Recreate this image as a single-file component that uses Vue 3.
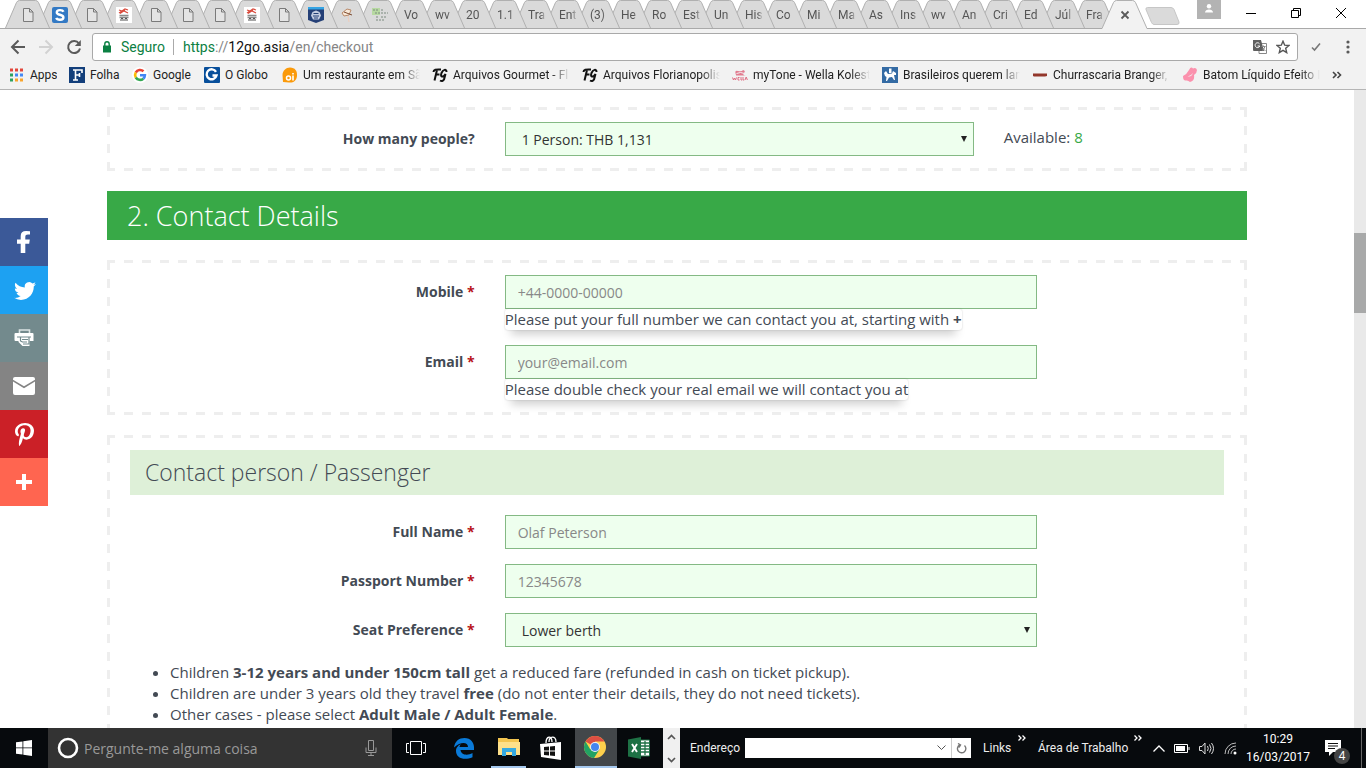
<script setup>
import { ref } from 'vue'

const iconTabs = ['doc', 'skype', 'doc', 'red', 'doc', 'doc', 'doc', 'red', 'doc', 'shield', 'hand', 'green']
const textTabs = [
  'Vo', 'wv', '20', '1.1', 'Tra', 'Ent', '(3)', 'He', 'Ro', 'Est', 'Un', 'His',
  'Co', 'Mi', 'Ma', 'As', 'Ins', 'wv', 'An', 'Cri', 'Ed', 'Júl', 'Fra'
]
const tabs = [
  ...iconTabs.map((icon) => ({ icon })),
  ...textTabs.map((label) => ({ label }))
]

const bookmarks = [
  { icon: 'apps', label: 'Apps', width: 27 },
  { icon: 'folha', label: 'Folha', width: 30 },
  { icon: 'google', label: 'Google', width: 39 },
  { icon: 'globo', label: 'O Globo', width: 45 },
  { icon: 'oi', label: 'Um restaurante em Sã', width: 117, fade: true },
  { icon: 'fg', label: 'Arquivos Gourmet - Fl', width: 117, fade: true },
  { icon: 'fg', label: 'Arquivos Florianopolis', width: 117, fade: true },
  { icon: 'wella', label: 'myTone - Wella Kolest', width: 117, fade: true },
  { icon: 'horse', label: 'Brasileiros querem lan', width: 117, fade: true },
  { icon: 'bar', label: 'Churrascaria Branger,', width: 117, fade: true },
  { icon: 'lips', label: 'Batom Líquido Efeito I', width: 117, fade: true }
]

const people = ref('1')
const seat = ref('lower')
const mobile = ref('')
const email = ref('')
const fullName = ref('')
const passport = ref('')
const address = ref('')
const question = ref('')
</script>

<template>
  <div class="screen">
    <header class="browser">
      <div class="tab-strip">
        <div
          v-for="(tab, i) in tabs"
          :key="i"
          class="tab"
          :class="{ 'tab-text': tab.label }"
          :style="{ zIndex: tabs.length - i }"
        >
          <svg class="tab-shape" width="45" height="28" viewBox="0 0 45 28">
            <path d="M0.5 28L11.5 2.5Q12.500 .5 14.500 .5H30.500Q32.500 .5 33.500 2.500L44.500 28" fill="#dadada" stroke="#b0b0b0" />
          </svg>
          <span v-if="tab.label" class="tab-label">{{ tab.label }}</span>
          <svg v-else class="tab-icon" width="16" height="16" viewBox="0 0 16 16">
            <path v-if="tab.icon === 'doc'" d="M3.500 1.500h6l3.500 3.500v9.500h-9.500zM9.500 1.500v3.500h3.500" fill="#e4e4e4" stroke="#7a7a7a" />
            <g v-else-if="tab.icon === 'skype'">
              <rect width="16" height="16" rx="2" fill="#3279c4" />
              <path d="M11.500 4.800C10.500 2.500 4.800 2.500 4.800 5.400C4.800 8.500 11.400 7 11.400 10.400C11.400 13.400 5.200 13.400 4.300 10.800" fill="none" stroke="#fff" stroke-width="2.400" />
            </g>
            <g v-else-if="tab.icon === 'red'">
              <rect width="16" height="16" fill="#fff" />
              <path d="M3 3l3 1 3-2 3 1M3 6l4-2.500 5 2.500M9 3L4 6.500" stroke="#d94b3d" stroke-width="1.300" fill="none" />
              <path d="M3.500 8.500h9M3.500 10.500h9M4 13h8" stroke="#8b8b8b" stroke-width="1.600" />
              <path d="M5 11.500h2M9 11.500h2" stroke="#555" />
            </g>
            <g v-else-if="tab.icon === 'shield'">
              <path d="M0 0h16v13l-8 3-8-3z" fill="#243f76" />
              <path d="M0 0h16v2.500H0z" fill="#35a4e4" />
              <path d="M4.500 5L8 3.500 11.500 5 13 8.500 11 12.500H5L3 8.500z" fill="#c3cbe0" />
              <path d="M5.500 6.500h5M5 9h6M6 11h4" stroke="#243f76" />
            </g>
            <g v-else-if="tab.icon === 'hand'">
              <path d="M2 6l5-4 4 1-2 5-5 1z" fill="#f9ead9" stroke="#b98a6a" />
              <path d="M4 5l8 3" stroke="#7c4a30" /><path d="M8 9l1 6" stroke="#f0cdbb" />
            </g>
            <g v-else>
              <path d="M0 1h8v7H0z" fill="#b7d9a1" />
              <path d="M1 3h6M3 6h5M9 3h3M9 6h7M4 10h3M9 10h6M4 13h8" stroke="#7b8a7e" stroke-dasharray="2 1" />
            </g>
          </svg>
        </div>
        <div class="tab tab-active">
          <svg class="tab-shape" width="45" height="29" viewBox="0 0 45 29">
            <path d="M0 28.500L11.500 2.500Q12.500 .5 14.500 .5H30.500Q32.500 .5 33.500 2.500L45 28.500V29H0z" fill="#f2f2f2" />
            <path d="M0 28.500L11.500 2.500Q12.500 .5 14.500 .5H30.500Q32.500 .5 33.500 2.500L45 28.500" fill="none" stroke="#b0b0b0" />
          </svg>
          <button class="plain tab-close" aria-label="Close tab">
            <svg width="10" height="10" viewBox="0 0 10 10"><path d="M1.500 1.500l7 7M8.500 1.500l-7 7" stroke="#5a5a5a" stroke-width="1.800" /></svg>
          </button>
        </div>
        <button class="plain new-tab" aria-label="New tab">
          <svg width="35" height="18" viewBox="0 0 35 18"><path d="M2.500 .5H26Q28 .5 29 2.500L34 15Q34.500 17.500 32 17.500H9Q7.500 17.500 6.500 15.500L1 2.500Q.5 .5 2.500 .5z" fill="#dadada" stroke="#c6c6c6" /></svg>
        </button>
        <div class="window-controls">
          <button class="profile" aria-label="Profile">
            <svg width="10" height="9" viewBox="0 0 10 9"><circle cx="5" cy="2.200" r="2.200" fill="#fff" /><path d="M1 8.500C1 4.500 9 4.500 9 8.500z" fill="#fff" /></svg>
          </button>
          <button class="plain" aria-label="Minimize"><svg width="10" height="10" viewBox="0 0 10 10"><path d="M0 5.500h10" stroke="#000" /></svg></button>
          <button class="plain" aria-label="Restore"><svg width="10" height="10" viewBox="0 0 10 10"><path d="M.5 2.500h7v7h-7zM2.500 2.500v-2h7v7h-2" fill="none" stroke="#000" /></svg></button>
          <button class="plain" aria-label="Close"><svg width="10" height="10" viewBox="0 0 10 10"><path d="M0 0l10 10M10 0L0 10" stroke="#000" /></svg></button>
        </div>
      </div>

      <div class="toolbar">
        <button class="plain" aria-label="Back">
          <svg width="16" height="16" viewBox="0 0 16 16"><path d="M15 8H2M8.500 1.500L2 8l6.500 6.500" fill="none" stroke="#5a5a5a" stroke-width="2" /></svg>
        </button>
        <button class="plain" aria-label="Forward">
          <svg width="16" height="16" viewBox="0 0 16 16"><path d="M1 8h13M7.500 1.500L14 8l-6.500 6.500" fill="none" stroke="#d2d2d2" stroke-width="2" /></svg>
        </button>
        <button class="plain" aria-label="Reload">
          <svg width="16" height="16" viewBox="0 0 16 16"><path d="M13 4.500A6 6 0 1 0 14 9.500" fill="none" stroke="#5a5a5a" stroke-width="2" /><path d="M14.800 1v6H8.800z" fill="#5a5a5a" /></svg>
        </button>
        <div class="omnibox">
          <svg width="10" height="12" viewBox="0 0 10 12"><rect x="1" y="4.500" width="8" height="7" fill="#0b8043" /><path d="M2.800 5V3a2.200 2.200 0 0 1 4.400 0v2" fill="none" stroke="#0b8043" stroke-width="1.400" /></svg>
          <span class="secure">Seguro</span>
          <span class="url"><span class="scheme">https</span>://<span class="host">12go.asia</span>/en/checkout</span>
          <svg width="14" height="14" viewBox="0 0 14 14">
            <path d="M6 3.500h7.500v10H6z" fill="#fff" stroke="#888" />
            <path d="M0 0h8l3 11H1q-1 0-1-1z" fill="#5f5f5f" />
            <path d="M6.500 3.800A2.400 2.400 0 1 0 6.800 6H4.600" fill="none" stroke="#fff" />
            <path d="M8.500 6.500h4M10.500 5.500v1M12 6.500q-1 3-3 4M9.500 8l3 3" fill="none" stroke="#888" />
          </svg>
          <svg width="14" height="14" viewBox="0 0 14 14"><path d="M7 1.200l1.700 4 4.300.3-3.300 2.800 1 4.300L7 10.300l-3.700 2.300 1-4.300L1 5.500l4.300-.3z" fill="none" stroke="#555" stroke-width="1.400" /></svg>
        </div>
        <svg width="10" height="10" viewBox="0 0 10 10"><path d="M1 5.500l2.500 2.500L9 1.500" fill="none" stroke="#777" stroke-width="1.600" /></svg>
        <button class="plain menu" aria-label="Menu">
          <svg width="4" height="14" viewBox="0 0 4 14"><g fill="#5a5a5a"><circle cx="2" cy="2" r="1.600" /><circle cx="2" cy="7" r="1.600" /><circle cx="2" cy="12" r="1.600" /></g></svg>
        </button>
      </div>

      <nav class="bookmarks">
        <a v-for="(mark, i) in bookmarks" :key="i" href="#" class="bookmark">
          <svg width="16" height="16" viewBox="0 0 16 16">
            <g v-if="mark.icon === 'apps'">
              <path d="M1 3h14" stroke="#e2463b" stroke-width="3" stroke-dasharray="3 2" />
              <path d="M1 8h3" stroke="#2da160" stroke-width="3" />
              <path d="M6 8h8" stroke="#4587f3" stroke-width="3" stroke-dasharray="3 2" />
              <path d="M1 13h3" stroke="#2da160" stroke-width="3" />
              <path d="M6 13h8" stroke="#f9a52d" stroke-width="3" stroke-dasharray="3 2" />
            </g>
            <g v-else-if="mark.icon === 'folha'">
              <rect width="16" height="16" fill="#133f7b" />
              <path d="M4 3h9v3M6.500 3v10M4 13h5M6.500 8h4.500M10.500 6v4" fill="none" stroke="#fff" stroke-width="1.600" />
            </g>
            <g v-else-if="mark.icon === 'google'" fill="none" stroke-width="2.600">
              <circle cx="8" cy="8" r="8" fill="#fff" />
              <path d="M3.800 5.500A5 5 0 0 1 11.500 4.300" stroke="#ea4335" />
              <path d="M3.800 10.500a5 5 0 0 1 0-5" stroke="#fbbc05" />
              <path d="M3.800 10.500a5 5 0 0 0 7.500 1.200" stroke="#34a853" />
              <path d="M11.300 11.700A5 5 0 0 0 12.900 8.200H8" stroke="#4285f4" />
            </g>
            <g v-else-if="mark.icon === 'globo'">
              <rect width="16" height="16" rx="1" fill="#084f9b" />
              <path d="M12 4.800A5 5 0 1 0 12.500 8.500H8.500" fill="none" stroke="#fff" stroke-width="2.400" />
            </g>
            <g v-else-if="mark.icon === 'oi'">
              <path d="M8 .5C13 .5 15.500 4 15 9s-4 7-8 6.500L1 15 .5 8C.5 4 4 .5 8 .5z" fill="#fb9a0a" />
              <circle cx="6.500" cy="11" r="2" fill="none" stroke="#fff" stroke-width="1.500" />
              <path d="M11 8.500v5M11 6v1.500" stroke="#fff" stroke-width="1.600" />
            </g>
            <g v-else-if="mark.icon === 'fg'" fill="none" stroke="#111" stroke-width="2">
              <path d="M1.500 5C1.500 2 5 2.500 9 2.500M5 3L2.500 13.500M3.500 7.500h4" />
              <path d="M14.500 5C14.500 1.500 11 2.500 9.500 6C8 10 10.500 11 13.500 7L12 12.500Q10.500 15 8 13.500" />
            </g>
            <g v-else-if="mark.icon === 'wella'" fill="none" stroke="#df6c82">
              <path d="M4 8Q2 3 6 4T11 3Q14 4 12 6T14 8.500H4z" fill="#e27c90" stroke="none" />
              <path d="M4.500 6.500q4-2 8 0" stroke="#f2f2f2" />
              <path d="M.5 10.500l1 2.500 1-2 1 2 1-2.500M7.500 10.500h-1.500v2.500h1.500M9 10v3h1.200M11 10v3h1.200M13 13l1.200-3 1.200 3" />
            </g>
            <g v-else-if="mark.icon === 'horse'">
              <rect width="16" height="16" fill="#346ba4" />
              <path d="M2 6l2-2 2 3 4-.5L11 4l3 2v2h-2l1 5h-1l-2-3-3 .5L5 14H4l.5-4L3 9zM7 1.500h2.500V6H7z" fill="#fff" />
            </g>
            <path v-else-if="mark.icon === 'bar'" d="M1 6.500h14v2.500l-2 .5H2L1 9z" fill="#93372b" />
            <path v-else d="M1 9Q5 7 7 3Q9-1 11 1.500Q14 0 15 3Q15 6 12 8Q13 14 8 15Q6 13 4 13.500Q1 14 1 9zM5 9q3 1 6-3q-2 5-6 3z" fill="#fb91ad" fill-rule="evenodd" />
          </svg>
          <span class="bookmark-label" :class="{ fade: mark.fade }" :style="{ width: mark.width + 'px' }">{{ mark.label }}</span>
        </a>
        <button class="plain" aria-label="More bookmarks">
          <svg width="10" height="8" viewBox="0 0 10 8"><path d="M1 1l3 3-3 3M5.500 1l3 3-3 3" fill="none" stroke="#444" stroke-width="1.600" /></svg>
        </button>
      </nav>
    </header>

    <div class="viewport">
      <main class="page">
        <section class="panel">
          <div class="row row-people">
            <label for="people">How many people?</label>
            <div class="control">
              <div class="select">
                <select id="people" v-model="people"><option value="1">1 Person: THB 1,131</option></select>
              </div>
            </div>
            <p class="available">Available: <span>8</span></p>
          </div>
        </section>

        <h2 class="section-title">2. Contact Details</h2>

        <section class="panel">
          <div class="row">
            <label for="mobile">Mobile <em>*</em></label>
            <div class="control">
              <input id="mobile" v-model="mobile" type="tel" placeholder="+44-0000-00000" />
              <span class="help">Please put your full number we can contact you at, starting with <b>+</b></span>
            </div>
          </div>
          <div class="row">
            <label for="email">Email <em>*</em></label>
            <div class="control">
              <input id="email" v-model="email" type="email" placeholder="your@email.com" />
              <span class="help">Please double check your real email we will contact you at</span>
            </div>
          </div>
        </section>

        <section class="panel">
          <h3 class="panel-title">Contact person / Passenger</h3>
          <div class="row">
            <label for="name">Full Name <em>*</em></label>
            <div class="control"><input id="name" v-model="fullName" type="text" placeholder="Olaf Peterson" /></div>
          </div>
          <div class="row">
            <label for="passport">Passport Number <em>*</em></label>
            <div class="control"><input id="passport" v-model="passport" type="text" placeholder="12345678" /></div>
          </div>
          <div class="row">
            <label for="seat">Seat Preference <em>*</em></label>
            <div class="control">
              <div class="select">
                <select id="seat" v-model="seat"><option value="lower">Lower berth</option></select>
              </div>
            </div>
          </div>
          <ul class="notes">
            <li>Children <b>3-12 years and under 150cm tall</b> get a reduced fare (refunded in cash on ticket pickup).</li>
            <li>Children are under 3 years old they travel <b>free</b> (do not enter their details, they do not need tickets).</li>
            <li>Other cases - please select <b>Adult Male / Adult Female</b>.</li>
          </ul>
        </section>
      </main>

      <div class="scrollbar"><div class="thumb"></div></div>

      <aside class="share">
        <a href="#" class="facebook" aria-label="Facebook">
          <svg width="32" height="32" viewBox="0 0 32 32"><path d="M22 5.200v3.400h-2q-2.700 0-2.700 2.200v2.600h4.500l-.6 4.300h-3.900V27h-4.600v-9.300H9v-4.300h3.700V10q0-4.900 5.400-5z" fill="#fff" /></svg>
        </a>
        <a href="#" class="twitter" aria-label="Twitter">
          <svg width="32" height="32" viewBox="0 0 32 32"><path d="M27.996 10.116c-.81.36-1.680.602-2.592.71a4.526 4.526 0 0 0 1.984-2.496 9.037 9.037 0 0 1-2.866 1.095 4.513 4.513 0 0 0-7.690 4.116 12.810 12.810 0 0 1-9.300-4.715 4.490 4.490 0 0 0-.612 2.270 4.510 4.510 0 0 0 2.008 3.755 4.495 4.495 0 0 1-2.044-.564v.057a4.515 4.515 0 0 0 3.620 4.425 4.520 4.520 0 0 1-2.038.077 4.517 4.517 0 0 0 4.217 3.134 9.055 9.055 0 0 1-5.604 1.930A9.180 9.180 0 0 1 6 23.850a12.773 12.773 0 0 0 6.918 2.027c8.300 0 12.840-6.876 12.840-12.840 0-.195-.005-.39-.014-.583a9.172 9.172 0 0 0 2.252-2.336" fill="#fff" /></svg>
        </a>
        <a href="#" class="print" aria-label="Print">
          <svg width="32" height="32" viewBox="0 0 32 32">
            <path d="M11.500 11V8h10v3" fill="none" stroke="#dce4e4" stroke-width="1.600" />
            <path d="M7.500 11h17q1 0 1 1v7h-4v5h-7l-4-4v-1h-3q-1 0-1-1v-6q0-1 1-1z" fill="#fff" />
            <path d="M9 15h14M12.500 15v4l2 1M21 15v7h-6M14 17.500h6M14 20h5" fill="none" stroke="#738a8d" stroke-width="1.200" />
          </svg>
        </a>
        <a href="#" class="mail" aria-label="Email">
          <svg width="32" height="32" viewBox="0 0 32 32"><path d="M5 9q0-2 2-2h18q2 0 2 2v.8l-11 6.400L5 9.800z" fill="#fff" /><path d="M5 11.600l11 6.600 11-6.600V23q0 2-2 2H7q-2 0-2-2z" fill="#fff" /></svg>
        </a>
        <a href="#" class="pinterest" aria-label="Pinterest">
          <svg width="32" height="32" viewBox="0 0 32 32"><path d="M7 13.252c0 1.810.772 4.450 2.895 5.045.074.014.178.040.252.040.490 0 .772-1.270.772-1.630 0-.428-1.174-1.340-1.174-3.123 0-3.705 3.028-6.330 6.947-6.330 3.370 0 5.863 1.782 5.863 5.058 0 2.446-1.054 7.035-4.468 7.035-1.232 0-2.286-.830-2.286-2.018 0-1.742 1.307-3.430 1.307-5.225 0-1.092-.670-1.977-1.916-1.977-1.692 0-2.732 1.770-2.732 3.165 0 .774.104 1.630.476 2.336-.683 2.736-2.080 6.814-2.080 9.633 0 .870.135 1.728.224 2.600l.134.137.207-.070c2.494-3.178 2.405-3.800 3.533-7.960.610 1.077 2.182 1.658 3.430 1.658 5.254 0 7.614-4.770 7.614-9.067C26 7.987 21.755 5 17.094 5 12.017 5 7 8.150 7 13.252z" fill="#fff" /></svg>
        </a>
        <a href="#" class="more" aria-label="More">
          <svg width="32" height="32" viewBox="0 0 32 32"><path d="M14 8h4v6h6v4h-6v6h-4v-6H8v-4h6z" fill="#fff" /></svg>
        </a>
      </aside>
    </div>

    <footer class="taskbar">
      <button class="plain start" aria-label="Start">
        <svg width="16" height="16" viewBox="0 0 16 16"><path d="M0 2.300L6.500 1.400V7.500H0zM7.300 1.300L16 0v7.500H7.300zM0 8.300h6.500v6.300L0 13.700zM7.300 8.300H16V16l-8.700-1.300z" fill="#fff" /></svg>
      </button>
      <div class="search">
        <svg width="22" height="22" viewBox="0 0 22 22"><circle cx="11" cy="11" r="9" fill="none" stroke="#fff" stroke-width="2.600" /></svg>
        <input v-model="question" type="text" aria-label="Search" placeholder="Pergunte-me alguma coisa" />
        <svg width="12" height="18" viewBox="0 0 12 18"><path d="M3.500 1.500h5v10h-5zM1 8.500v5h10v-5M6 13.500v3M3 16.500h6" fill="none" stroke="#999" /></svg>
      </div>
      <button class="plain app" aria-label="Task view">
        <svg width="20" height="14" viewBox="0 0 20 14"><path d="M4.500 .5h11v13h-11zM3 2.500H.5v9H3M17 2.500h2.500v9H17" fill="none" stroke="#fff" /></svg>
      </button>
      <button class="plain app" aria-label="Edge">
        <svg width="20" height="21" viewBox="0 0 20 21"><path d="M0 9.500C1 3 5 0 10.500 0 17 0 20 5 20 9v3H6.500c.5 5 7 6 12 3v4.200C10 23 2 20 2 13c0-4 3-6 5-7-1 1-1.500 2.500-1.500 3H14C14 4 7 3 0 9.500z" fill="#0a7ad8" /></svg>
      </button>
      <button class="plain explorer" aria-label="Explorer">
        <svg width="22" height="18" viewBox="0 0 22 18"><path d="M0 0h9l1 1h11v16H0z" fill="#f3c550" /><path d="M0 4h22v13H0z" fill="#fde08a" /><path d="M4 18V10h14v8h-4v-4H8v4z" fill="#35a9e1" /></svg>
      </button>
      <button class="plain app" aria-label="Store">
        <svg width="22" height="24" viewBox="0 0 22 24"><path d="M6 7C6 0 12-1 12 6M9 6C9 0 16-1 16 6" fill="none" stroke="#fff" stroke-width="1.300" /><path d="M0 8l21-2v18L1 21z" fill="#fff" /><path d="M4 11l5-.5v4H4zM10 10.400l5-.4v4.500h-5zM4 15.500h5v4L4 19zM10 15.500h5V20l-5-.5z" fill="#111" /></svg>
      </button>
      <button class="plain chrome" aria-label="Chrome">
        <svg width="22" height="22" viewBox="0 0 22 22">
          <circle cx="11" cy="11" r="11" fill="#fdd04c" />
          <path d="M11 11L1.500 5.500A11 11 0 0 1 20.500 5.500H11z" fill="#dd4f43" />
          <path d="M1.500 5.500A11 11 0 0 0 10 22l5.500-8.500L6 13z" fill="#22a263" />
          <circle cx="11" cy="11" r="5" fill="#f3f3f3" /><circle cx="11" cy="11" r="4" fill="#4586ee" />
        </svg>
      </button>
      <button class="plain excel" aria-label="Excel">
        <svg width="22" height="22" viewBox="0 0 22 22"><path d="M12 3h9.500v16H12z" fill="#fff" stroke="#1e7145" /><path d="M13 6h8M13 9h8M13 12h8M13 15h8M17 4v14" stroke="#1e7145" stroke-width="1.300" /><path d="M0 2.500L13 0v22L0 19.500z" fill="#1e7145" /><path d="M4 7l5 8M9 7l-5 8" stroke="#fff" stroke-width="1.900" /></svg>
      </button>
      <div class="task-scroll">
        <svg width="9" height="6" viewBox="0 0 9 6"><path d="M1 5l3.500-3.500L8 5" fill="none" stroke="#555" stroke-width="1.700" /></svg>
        <svg width="9" height="6" viewBox="0 0 9 6"><path d="M1 1l3.500 3.500L8 1" fill="none" stroke="#555" stroke-width="1.700" /></svg>
      </div>
      <label class="address-label" for="address">Endereço</label>
      <div class="address">
        <input id="address" v-model="address" type="text" />
        <svg width="9" height="6" viewBox="0 0 9 6"><path d="M.5 .5l4 4 4-4" fill="none" stroke="#555" /></svg>
        <button class="plain refresh" aria-label="Refresh">
          <svg width="11" height="11" viewBox="0 0 11 11"><path d="M8.500 2.500a4.200 4.200 0 1 1-5 -.5M2 .5l2.500 1.500L3 4.500" fill="none" stroke="#777" stroke-width="1.400" /></svg>
        </button>
      </div>
      <span class="band band-links">Links</span>
      <svg class="overflow" width="8" height="6" viewBox="0 0 8 6"><path d="M.5 .5L3 3 .5 5.500M4.500 .5L7 3 4.500 5.500" fill="none" stroke="#fff" stroke-width="1.300" /></svg>
      <span class="band band-desktop">Área de Trabalho</span>
      <svg class="overflow" width="8" height="6" viewBox="0 0 8 6"><path d="M.5 .5L3 3 .5 5.500M4.500 .5L7 3 4.500 5.500" fill="none" stroke="#fff" stroke-width="1.300" /></svg>
      <div class="tray">
        <svg width="12" height="7" viewBox="0 0 12 7"><path d="M.5 6.500L6 1l5.500 5.500" fill="none" stroke="#fff" stroke-width="1.300" /></svg>
        <svg width="16" height="9" viewBox="0 0 16 9"><path d="M.5 .5h13v8H.5zM15 3v3" fill="none" stroke="#fff" /><path d="M2 2h9v5H2z" fill="#fff" /></svg>
        <svg width="16" height="13" viewBox="0 0 16 13"><path d="M.5 4.500H3l3-3.500v11L3 8.500H.5zM8.500 4q1.500 2.500 0 5M10.500 2.500q3 4 0 8M12.500 1q4 5.500 0 11" fill="none" stroke="#ddd" /></svg>
        <svg width="14" height="13" viewBox="0 0 14 13"><g fill="none" stroke="#bbb"><path d="M1 12A11 11 0 0 1 12 1M4 12A8 8 0 0 1 12 4M7 12A5 5 0 0 1 12 7" /></g><circle cx="11" cy="11" r="1.500" fill="#fff" /></svg>
      </div>
      <div class="clock"><span>10:29</span><span>16/03/2017</span></div>
      <button class="plain notices" aria-label="Notifications">
        <svg width="16" height="16" viewBox="0 0 16 16"><path d="M0 0h16v12H8l-4 4v-4H0z" fill="#fff" /><path d="M3 3.500h10M3 6h10M3 8.500h7" stroke="#111" /></svg>
        <span class="badge">4</span>
      </button>
      <div class="show-desktop"></div>
    </footer>
  </div>
</template>

<style>
body {
  margin: 0;
  background: #fff;
}
</style>

<style scoped>
.screen {
  display: flex;
  flex-direction: column;
  height: 100vh;
  overflow: hidden;
  font-family: "Open Sans", "Noto Sans", sans-serif;
  color: #434a54;
}

.screen * {
  box-sizing: border-box;
}

svg {
  display: block;
  flex: none;
}

.plain {
  display: flex;
  align-items: center;
  justify-content: center;
  padding: 0;
  border: 0;
  background: none;
}

/* Browser chrome */
.browser {
  flex: none;
  height: 90px;
  background: #f2f2f2;
  border-bottom: 1px solid #b5b5b5;
  font-family: Roboto, "Open Sans", sans-serif;
}

.tab-strip {
  display: flex;
  height: 28px;
  padding-left: 5px;
  background: #fff;
}

.tab {
  position: relative;
  flex: none;
  width: 32px;
}

.tab-text {
  width: 31px;
}

.tab-shape {
  position: absolute;
  left: 0;
  top: 0;
}

.tab-icon {
  position: relative;
  margin: 7px 0 0 15px;
}

.tab-label {
  position: relative;
  display: block;
  width: 18px;
  margin-left: 15px;
  overflow: hidden;
  font-size: 12px;
  line-height: 30px;
  color: #555;
  white-space: nowrap;
  mask-image: linear-gradient(90deg, #000 70%, transparent);
}

.tab-active {
  z-index: 50;
  width: 43px;
}

.tab-close {
  position: relative;
  margin: 10px 0 0 18px;
}

.new-tab {
  flex: none;
  align-self: flex-start;
  margin-top: 7px;
}

.window-controls {
  display: flex;
  align-items: center;
  gap: 35px;
  margin-left: auto;
  padding: 0 20px 2px 0;
}

.profile {
  display: flex;
  align-items: flex-start;
  justify-content: center;
  align-self: flex-start;
  width: 24px;
  height: 19px;
  margin-right: -10px;
  padding: 4px 0 0;
  border: 0;
  background: #b3b3b3;
}

.toolbar {
  display: flex;
  align-items: center;
  gap: 12px;
  height: 37px;
  padding: 0 16px 0 10px;
  border-top: 1px solid #a9a9a9;
}

.omnibox {
  display: flex;
  flex: 1;
  align-items: center;
  gap: 9px;
  height: 28px;
  margin: 0 1px 0 -2px;
  padding: 0 7px 0 9px;
  border: 1px solid #a9a9a9;
  border-radius: 3px;
  background: #fff;
  font-size: 14px;
}

.secure {
  padding-right: 8px;
  border-right: 1px solid #aaa;
  line-height: 16px;
  color: #0b8043;
}

.url {
  flex: 1;
  color: #858585;
}

.scheme {
  color: #0b8043;
}

.host {
  color: #111;
}

.menu {
  margin-left: 13px;
}

.bookmarks {
  display: flex;
  align-items: center;
  gap: 12px;
  height: 20px;
  padding-left: 9px;
}

.bookmark {
  display: flex;
  align-items: center;
  gap: 5px;
  color: #222;
  text-decoration: none;
}

.bookmark-label {
  overflow: hidden;
  font-size: 12px;
  line-height: 20px;
  white-space: nowrap;
}

.fade {
  mask-image: linear-gradient(90deg, #000 84%, transparent);
}

/* Page */
.viewport {
  position: relative;
  display: flex;
  flex: 1;
  min-height: 0;
}

.page {
  flex: 1;
  max-width: 1140px;
  margin: 0 auto;
  padding-top: 17px;
  overflow: hidden;
}

.panel {
  margin-bottom: 20px;
  padding: 15px 23px 0;
  background:
    repeating-linear-gradient(90deg, #eee 0 8px, transparent 8px 17px, #eee 17px 18px) left top / 100% 3px no-repeat,
    repeating-linear-gradient(90deg, #eee 0 8px, transparent 8px 17px, #eee 17px 18px) left bottom / 100% 3px no-repeat,
    repeating-linear-gradient(180deg, transparent 0 1px, #eee 1px 10px, transparent 10px 18px) left top / 3px 100% no-repeat,
    repeating-linear-gradient(180deg, transparent 0 1px, #eee 1px 10px, transparent 10px 18px) right top / 3px 100% no-repeat;
}

/* keeps the last row's margin inside the panel */
.panel::after {
  content: "";
  display: table;
}

.row {
  display: grid;
  grid-template-columns: 4fr 6fr 2fr;
  margin: 0 -15px 15px;
}

.row-people {
  grid-template-columns: 33.333% 44.4% 1fr;
}

.row label {
  padding: 7px 15px 0;
  font-size: 14px;
  font-weight: 700;
  line-height: 20px;
  text-align: right;
}

.row em {
  font-style: normal;
  color: #b7131a;
}

.control {
  padding: 0 15px;
}

.row input,
.row select {
  display: block;
  width: 100%;
  height: 34px;
  padding: 0 12px;
  border: 1px solid #84b984;
  border-radius: 0;
  background: #efe;
  font-family: inherit;
  font-size: 14px;
  color: #333;
}

.row input::placeholder {
  color: #888;
}

.row select {
  padding-left: 16px;
  appearance: none;
}

.select {
  position: relative;
}

.select::after {
  content: "";
  position: absolute;
  top: 14px;
  right: 7px;
  border: solid transparent;
  border-width: 6px 3px 0;
  border-top-color: #222;
}

.help {
  display: table;
  border-radius: 3px;
  box-shadow: 0 0 2px rgba(0, 0, 0, 0.2), 0 10px 10px -6px rgba(0, 0, 0, 0.22);
  font-size: 15px;
  line-height: 21px;
  white-space: nowrap;
}

.available {
  margin: 0;
  padding: 5px 15px 0;
  font-size: 15px;
  line-height: 21px;
}

.available span {
  color: #38a947;
}

.section-title {
  margin: 0 0 20px;
  padding: 0 20px;
  background: #38a947;
  font-size: 27px;
  font-weight: 300;
  line-height: 49px;
  color: #fff;
}

.panel-title {
  margin: 0 0 20px;
  padding: 0 15px;
  background: #def0d8;
  font-size: 23px;
  font-weight: 300;
  line-height: 45px;
}

.notes {
  margin: 0;
  padding: 0 0 20px 40px;
  font-size: 15px;
  line-height: 21px;
}

.scrollbar {
  flex: none;
  width: 12px;
  padding-top: 143px;
  background: #e9e9e9;
}

.thumb {
  height: 80px;
  background: #a8a9a9;
}

.share {
  position: absolute;
  top: 128px;
  left: 0;
}

.share a {
  display: flex;
  align-items: center;
  justify-content: center;
  width: 48px;
  height: 48px;
}

.facebook {
  background: #3b5998;
}

.twitter {
  background: #1da1f2;
}

.print {
  background: #738a8d;
}

.mail {
  background: #848484;
}

.pinterest {
  background: #cb2027;
}

.more {
  background: #ff6550;
}

/* Taskbar */
.taskbar {
  display: flex;
  flex: none;
  align-items: center;
  height: 40px;
  background: #070a0d;
  font-family: Roboto, "Open Sans", sans-serif;
  font-size: 12px;
  color: #eee;
}

.start,
.app {
  width: 48px;
  height: 40px;
}

.search {
  display: flex;
  align-items: center;
  gap: 5px;
  width: 344px;
  height: 40px;
  padding: 0 15px 0 9px;
  background: #333;
}

.search input {
  flex: 1;
  min-width: 0;
  padding: 0;
  border: 0;
  background: none;
  font-family: "Open Sans", sans-serif;
  font-size: 14px;
  color: #ccc;
}

.search input::placeholder {
  color: #999;
}

.explorer {
  width: 35px;
  height: 40px;
  margin: 0 1px 0 3px;
  border-bottom: 2px solid #a5c8ee;
}

.chrome {
  width: 42px;
  height: 40px;
  padding-right: 2px;
  border-bottom: 2px solid #a5c8ee;
  background: #43474a;
}

.excel {
  width: 46px;
  height: 40px;
  padding-right: 2px;
}

.task-scroll {
  display: flex;
  flex-direction: column;
  align-items: center;
  justify-content: space-between;
  width: 17px;
  height: 40px;
  padding: 6px 0 5px;
  background: #f0f0f0;
}

.address-label {
  width: 65px;
  padding-left: 10px;
  white-space: nowrap;
}

.address {
  display: flex;
  flex: 1;
  align-items: center;
  height: 20px;
  background: #fff;
}

.address input {
  flex: 1;
  min-width: 0;
  height: 20px;
  padding: 0 4px;
  border: 0;
  background: none;
}

.refresh {
  width: 20px;
  height: 20px;
  margin-left: 5px;
  border-left: 1px solid #ccc;
}

.band {
  padding-left: 12px;
  white-space: nowrap;
}

.band-links {
  width: 47px;
}

.band-desktop {
  width: 108px;
}

.overflow {
  align-self: flex-start;
  margin-top: 7px;
}

.tray {
  display: flex;
  align-items: center;
  gap: 9px;
  padding: 0 8px 0 11px;
}

.clock {
  display: flex;
  flex-direction: column;
  align-items: center;
  width: 64px;
  line-height: 18px;
  color: #fff;
}

.notices {
  position: relative;
  justify-content: flex-start;
  width: 25px;
  height: 20px;
  margin: 0 11px 0 15px;
}

.badge {
  position: absolute;
  right: 0;
  bottom: -6px;
  width: 16px;
  border-radius: 8px;
  background: #444;
  font-size: 12px;
  line-height: 16px;
  color: #fff;
  text-align: center;
}

.show-desktop {
  width: 5px;
  height: 40px;
  border-left: 1px solid #666;
}
</style>
